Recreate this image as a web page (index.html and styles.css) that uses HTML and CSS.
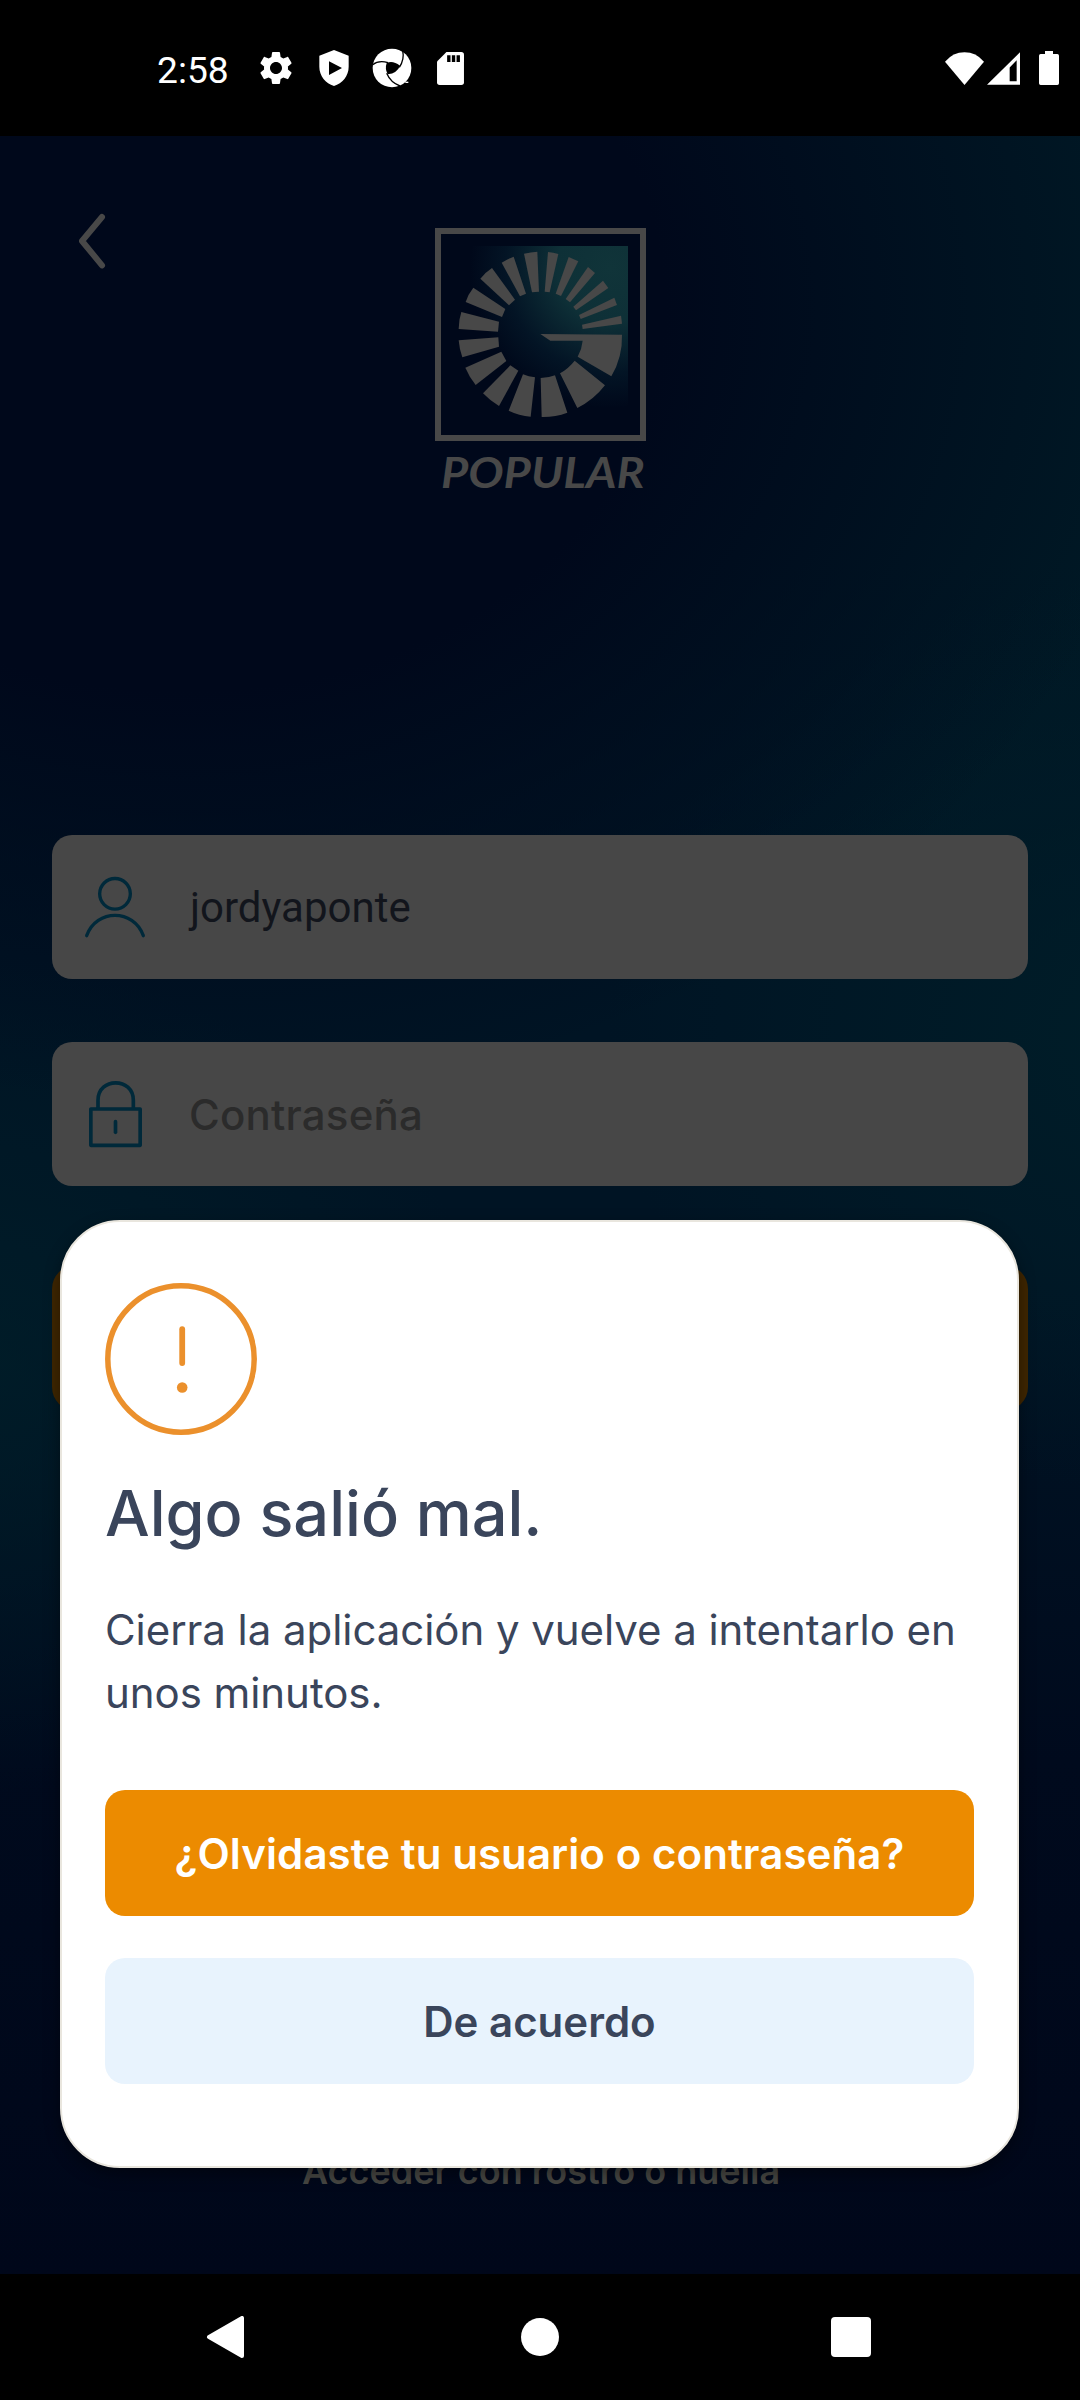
FILE: index.html
```
<!DOCTYPE html>
<html lang="es">
<head>
<meta charset="utf-8">
<title>Popular</title>
<link rel="stylesheet" href="styles.css">
</head>
<body>
<div class="phone">
  <header class="status-bar">
    <span class="clock">2:58</span>
    <div class="status-icons">
      <svg class="icon-gear" viewBox="0 0 24 24"><path fill="#fff" d="M19.14 12.94c.04-.3.06-.61.06-.94 0-.32-.02-.64-.07-.94l2.03-1.58c.18-.14.23-.41.12-.61l-1.92-3.32c-.12-.22-.37-.29-.59-.22l-2.39.96c-.5-.38-1.03-.7-1.62-.94l-.36-2.54c-.04-.24-.24-.41-.48-.41h-3.84c-.24 0-.43.17-.47.41l-.36 2.54c-.59.24-1.13.57-1.62.94l-2.39-.96c-.22-.08-.47 0-.59.22L2.74 8.87c-.12.21-.08.47.12.61l2.03 1.58c-.05.3-.09.63-.09.94s.02.64.07.94l-2.03 1.58c-.18.14-.23.41-.12.61l1.92 3.32c.12.22.37.29.59.22l2.39-.96c.5.38 1.03.7 1.62.94l.36 2.54c.05.24.24.41.48.41h3.84c.24 0 .44-.17.47-.41l.36-2.54c.59-.24 1.13-.56 1.62-.94l2.39.96c.22.08.47 0 .59-.22l1.92-3.32c.12-.22.07-.47-.12-.61l-2.01-1.58zM12 15.6c-1.98 0-3.6-1.62-3.6-3.6s1.62-3.6 3.6-3.6 3.6 1.62 3.6 3.6-1.62 3.6-3.6 3.6z"/></svg>
      <svg class="icon-shield" viewBox="0 0 90 108"><path fill="#fff" fill-rule="evenodd" d="M45 0L89 17V50C89 78 70 100 45 108C20 100 1 78 1 50V17ZM30 34V75L69 54Z"/></svg>
      <svg class="icon-aperture" viewBox="0 0 120 120">
        <circle cx="60" cy="60" r="58" fill="#fff"/>
        <path fill="#000" d="M44 45Q62 36 84 53Q76 75 47 79Q38 62 44 45Z"/>
        <path fill="none" stroke="#000" stroke-width="4" d="M2 50Q20 36 48 44M92 8Q98 34 82 58M44 76Q56 104 84 114"/>
        <path fill="#fff" d="M100 101h9v4h-9z"/>
      </svg>
      <svg class="icon-sd" viewBox="0 0 80 98"><path fill="#fff" d="M28 0H72Q80 0 80 8V90Q80 98 72 98H8Q0 98 0 90V28Z"/><path fill="#000" d="M30 10h10v20H30zM44 10h10v20H44zM58 10h10v20H58z"/></svg>
    </div>
    <div class="system-icons">
      <svg class="icon-wifi" viewBox="0 0 117 99"><path fill="#fff" d="M0 29Q24 1 58.500 1Q93 1 117 29L58.500 99Z"/></svg>
      <svg class="icon-signal" viewBox="0 0 99 98"><path fill="#fff" fill-rule="evenodd" d="M99 0V98H0ZM89 24L68 46V87H89Z"/></svg>
      <svg class="icon-battery" viewBox="0 0 60 102"><path fill="#fff" d="M18 0H42V9H55Q60 9 60 14V97Q60 102 55 102H5Q0 102 0 97V14Q0 9 5 9H18Z"/></svg>
    </div>
  </header>

  <main class="login">
    <div class="login-header">
      <svg class="back" viewBox="110 67 96 174"><path fill="none" stroke="#484848" stroke-width="18" stroke-linecap="round" stroke-linejoin="round" d="M188 82L128 154L188 227"/></svg>
      <svg class="logo" viewBox="0 0 720 870">
        <defs>
          <radialGradient id="glow" gradientUnits="userSpaceOnUse" cx="570" cy="160" r="420">
            <stop offset="0" stop-color="#103439"/>
            <stop offset=".38" stop-color="#0e3037"/>
            <stop offset=".75" stop-color="#031425"/>
            <stop offset="1" stop-color="#00081a"/>
          </radialGradient>
        </defs>
        <rect x="54" y="48" width="615" height="621" fill="#00081a" stroke="#484848" stroke-width="18"/>
        <rect x="150" y="93" width="474" height="482" fill="url(#glow)"/>
        <g fill="#484848">
          <path d="M312 116Q332 111 352 110L357 230L336 232Z"/>
          <path d="M384 111Q400 112 415 117L389 232L374 230Z"/>
          <path d="M446 126L475 139L423 243L407 236Z"/>
          <path d="M504 156L525 174L450 262L437 252Z"/>
          <path d="M549 197L565 219L468 286L460 275Z"/>
          <path d="M583 248L591 270L482 312L477 300Z"/>
          <path d="M603 302L606 326L488 342L486 329Z"/>
          <path d="M361 357L606 359Q608 426 574 484L473 425Q486 401 488 377H391Z"/>
          <path d="M464 437L555 511Q521 555 472 579L420 475Q446 460 464 437Z"/>
          <path d="M405 481L442 593Q404 607 365 606L362 489Q385 489 405 481Z"/>
          <path d="M345 487L332 605Q297 602 266 587L309 478Q326 485 345 487Z"/>
          <path d="M295 467L237 573Q210 557 189 535L271 451Z"/>
          <path d="M259 438L167 510Q148 486 136 458L244 410Z"/>
          <path d="M237 395L127 427Q118 402 116 376L235 367Z"/>
          <path d="M234 350L116 342Q116 316 124 291L237 320Z"/>
          <path d="M246 306L137 261Q144 238 160 218L256 282Z"/>
          <path d="M267 271L181 191Q196 172 216 159L285 254Z"/>
          <path d="M300 244L245 143Q262 132 281 125L318 236Z"/>
        </g>
        <text class="logo-name" x="63" y="819" textLength="611" lengthAdjust="spacingAndGlyphs">POPULAR</text>
      </svg>
    </div>
    <div class="field">
      <svg class="icon-user" viewBox="129 165 192 192"><g fill="none" stroke="#00293a" stroke-width="10" stroke-linecap="round"><circle cx="225" cy="221.500" r="46"/><path d="M140 347C170 266 280 266 310 347"/></g></svg>
      <span class="field-value">jordyaponte</span>
    </div>
    <div class="field">
      <svg class="icon-lock" viewBox="129 780 192 204"><g fill="none" stroke="#00293a" stroke-width="11" stroke-linejoin="round"><rect x="152.500" y="867" width="148" height="109"/><path d="M174 867V841C174 771 280 771 280 841V867"/><path stroke-linecap="round" d="M226.500 905V937"/></g></svg>
      <span class="field-placeholder">Contraseña</span>
    </div>
    <div class="submit"></div>
    <p class="biometric">Acceder con rostro o huella</p>
  </main>

  <nav class="nav-bar">
    <svg class="nav-back" viewBox="0 0 38 42"><path fill="#fff" stroke="#fff" stroke-width="4" stroke-linejoin="round" d="M36 2V40L3 21Z"/></svg>
    <span class="nav-home"></span>
    <span class="nav-recent"></span>
  </nav>

  <section class="dialog">
    <svg class="warning" viewBox="0 0 152 152"><circle cx="76" cy="76" r="73.200" fill="none" stroke="#eb902c" stroke-width="5.500"/><path stroke="#eb902c" stroke-width="5.800" stroke-linecap="round" d="M77.200 46.200V80"/><circle cx="77.200" cy="104.500" r="5.300" fill="#eb902c"/></svg>
    <h1 class="dialog-title">Algo salió mal.</h1>
    <p class="dialog-text">Cierra la aplicación y vuelve a intentarlo en unos minutos.</p>
    <div class="button button-primary">¿Olvidaste tu usuario o contraseña?</div>
    <div class="button button-secondary">De acuerdo</div>
  </section>
</div>
</body>
</html>
```
FILE: styles.css
```
* { box-sizing: border-box; }
body { margin: 0; background: #000; }
svg { display: block; flex: none; }

.phone {
  position: relative;
  display: flex;
  flex-direction: column;
  width: 1080px;
  height: 2400px;
  overflow: hidden;
  font-family: Inter, sans-serif;
}

.status-bar {
  display: flex;
  align-items: center;
  height: 136px;
  padding: 0 21px 0 157px;
  background: #000;
}
.clock {
  width: 99px;
  padding-top: 3px;
  color: #fff;
  font: 400 37.2px/44px Roboto, sans-serif;
}
.status-icons { display: flex; align-items: center; }
.icon-gear { width: 40px; height: 40px; }
.icon-shield { width: 30px; height: 36px; margin-left: 23px; }
.icon-aperture { width: 40px; height: 40px; margin-left: 23px; }
.icon-sd { width: 27px; height: 33px; margin-left: 25px; }
.system-icons { display: flex; align-items: center; margin-left: auto; }
.icon-wifi { width: 39px; height: 33px; }
.icon-signal { width: 33px; height: 33px; margin-left: 3px; }
.icon-battery { width: 20px; height: 34px; margin-left: 19px; }

.login {
  display: flex;
  flex-direction: column;
  height: 2138px;
  padding: 79px 52px 0;
  background:
    radial-gradient(ellipse 1000px 800px at 17% 8%, #00081b 0, #00081b 48%, rgba(0, 8, 27, 0) 100%),
    radial-gradient(ellipse 560px 460px at 108% 42%, rgba(0, 33, 42, .75) 0, rgba(0, 33, 42, 0) 100%),
    radial-gradient(ellipse 560px 420px at -6% 58%, rgba(0, 32, 42, .75) 0, rgba(0, 32, 42, 0) 100%),
    linear-gradient(180deg, #001925 0, #001925 20%, #001424 38%, #001424 54%, #000a1d 76%, #00071a 100%);
}
.login-header {
  display: grid;
  grid-template-columns: 376px 240px 1fr;
  height: 620px;
}
.back { width: 32px; height: 58px; margin: -3px 0 0 24px; }
.logo { width: 240px; height: 290px; margin-left: -8px; }
.logo-name {
  font: italic 700 124px Lato, sans-serif;
  fill: #484848;
}
.field {
  display: flex;
  align-items: center;
  height: 144px;
  margin-bottom: 63px;
  padding-left: 31px;
  border-radius: 20px;
  background: #474747;
}
.icon-user { width: 64px; height: 64px; }
.icon-lock { width: 64px; height: 68px; }
.field-value {
  margin-left: 43px;
  padding-top: 2px;
  color: #12151c;
  font: 400 42px/50px Roboto, sans-serif;
}
.field-placeholder {
  margin-left: 42px;
  padding-top: 2px;
  color: #2b2b2b;
  font-size: 42px;
  font-weight: 500;
  line-height: 50px;
  letter-spacing: .2px;
}
.submit {
  height: 146px;
  margin-top: 16px;
  border-radius: 24px;
  background: #3f2600;
}
.biometric {
  margin: 737px 0 0 2px;
  color: #474743;
  font-size: 36px;
  font-weight: 600;
  line-height: 46px;
  text-align: center;
}

.nav-bar {
  display: flex;
  align-items: center;
  height: 126px;
  padding-left: 206px;
  background: #000;
}
.nav-back { width: 38px; height: 42px; }
.nav-home {
  width: 38px;
  height: 38px;
  margin-left: 277px;
  border-radius: 50%;
  background: #fff;
}
.nav-recent {
  width: 40px;
  height: 40px;
  margin-left: 272px;
  border-radius: 4px;
  background: #fff;
}

.dialog {
  position: absolute;
  top: 1220px;
  left: 60px;
  width: 959px;
  height: 948px;
  padding: 61px 43px 0;
  border: 2px solid #e9e6de;
  border-radius: 60px;
  background: #fff;
  box-shadow: 0 6px 16px rgba(0, 0, 0, .4);
  color: #3a455b;
}
.warning { width: 152px; height: 152px; }
.dialog-title {
  margin: 40px 0 0;
  font-size: 63px;
  font-weight: 500;
  line-height: 76px;
}
.dialog-text {
  margin: 47px 0 0;
  font-size: 42px;
  line-height: 63px;
  letter-spacing: -.06px;
}
.button {
  display: flex;
  align-items: center;
  justify-content: center;
  height: 126px;
  border-radius: 20px;
  font-size: 42px;
  font-weight: 600;
}
.button-primary { margin-top: 66px; background: #ec8b00; color: #fff; letter-spacing: .08px; }
.button-secondary { margin-top: 42px; background: #e8f3fd; }
```
